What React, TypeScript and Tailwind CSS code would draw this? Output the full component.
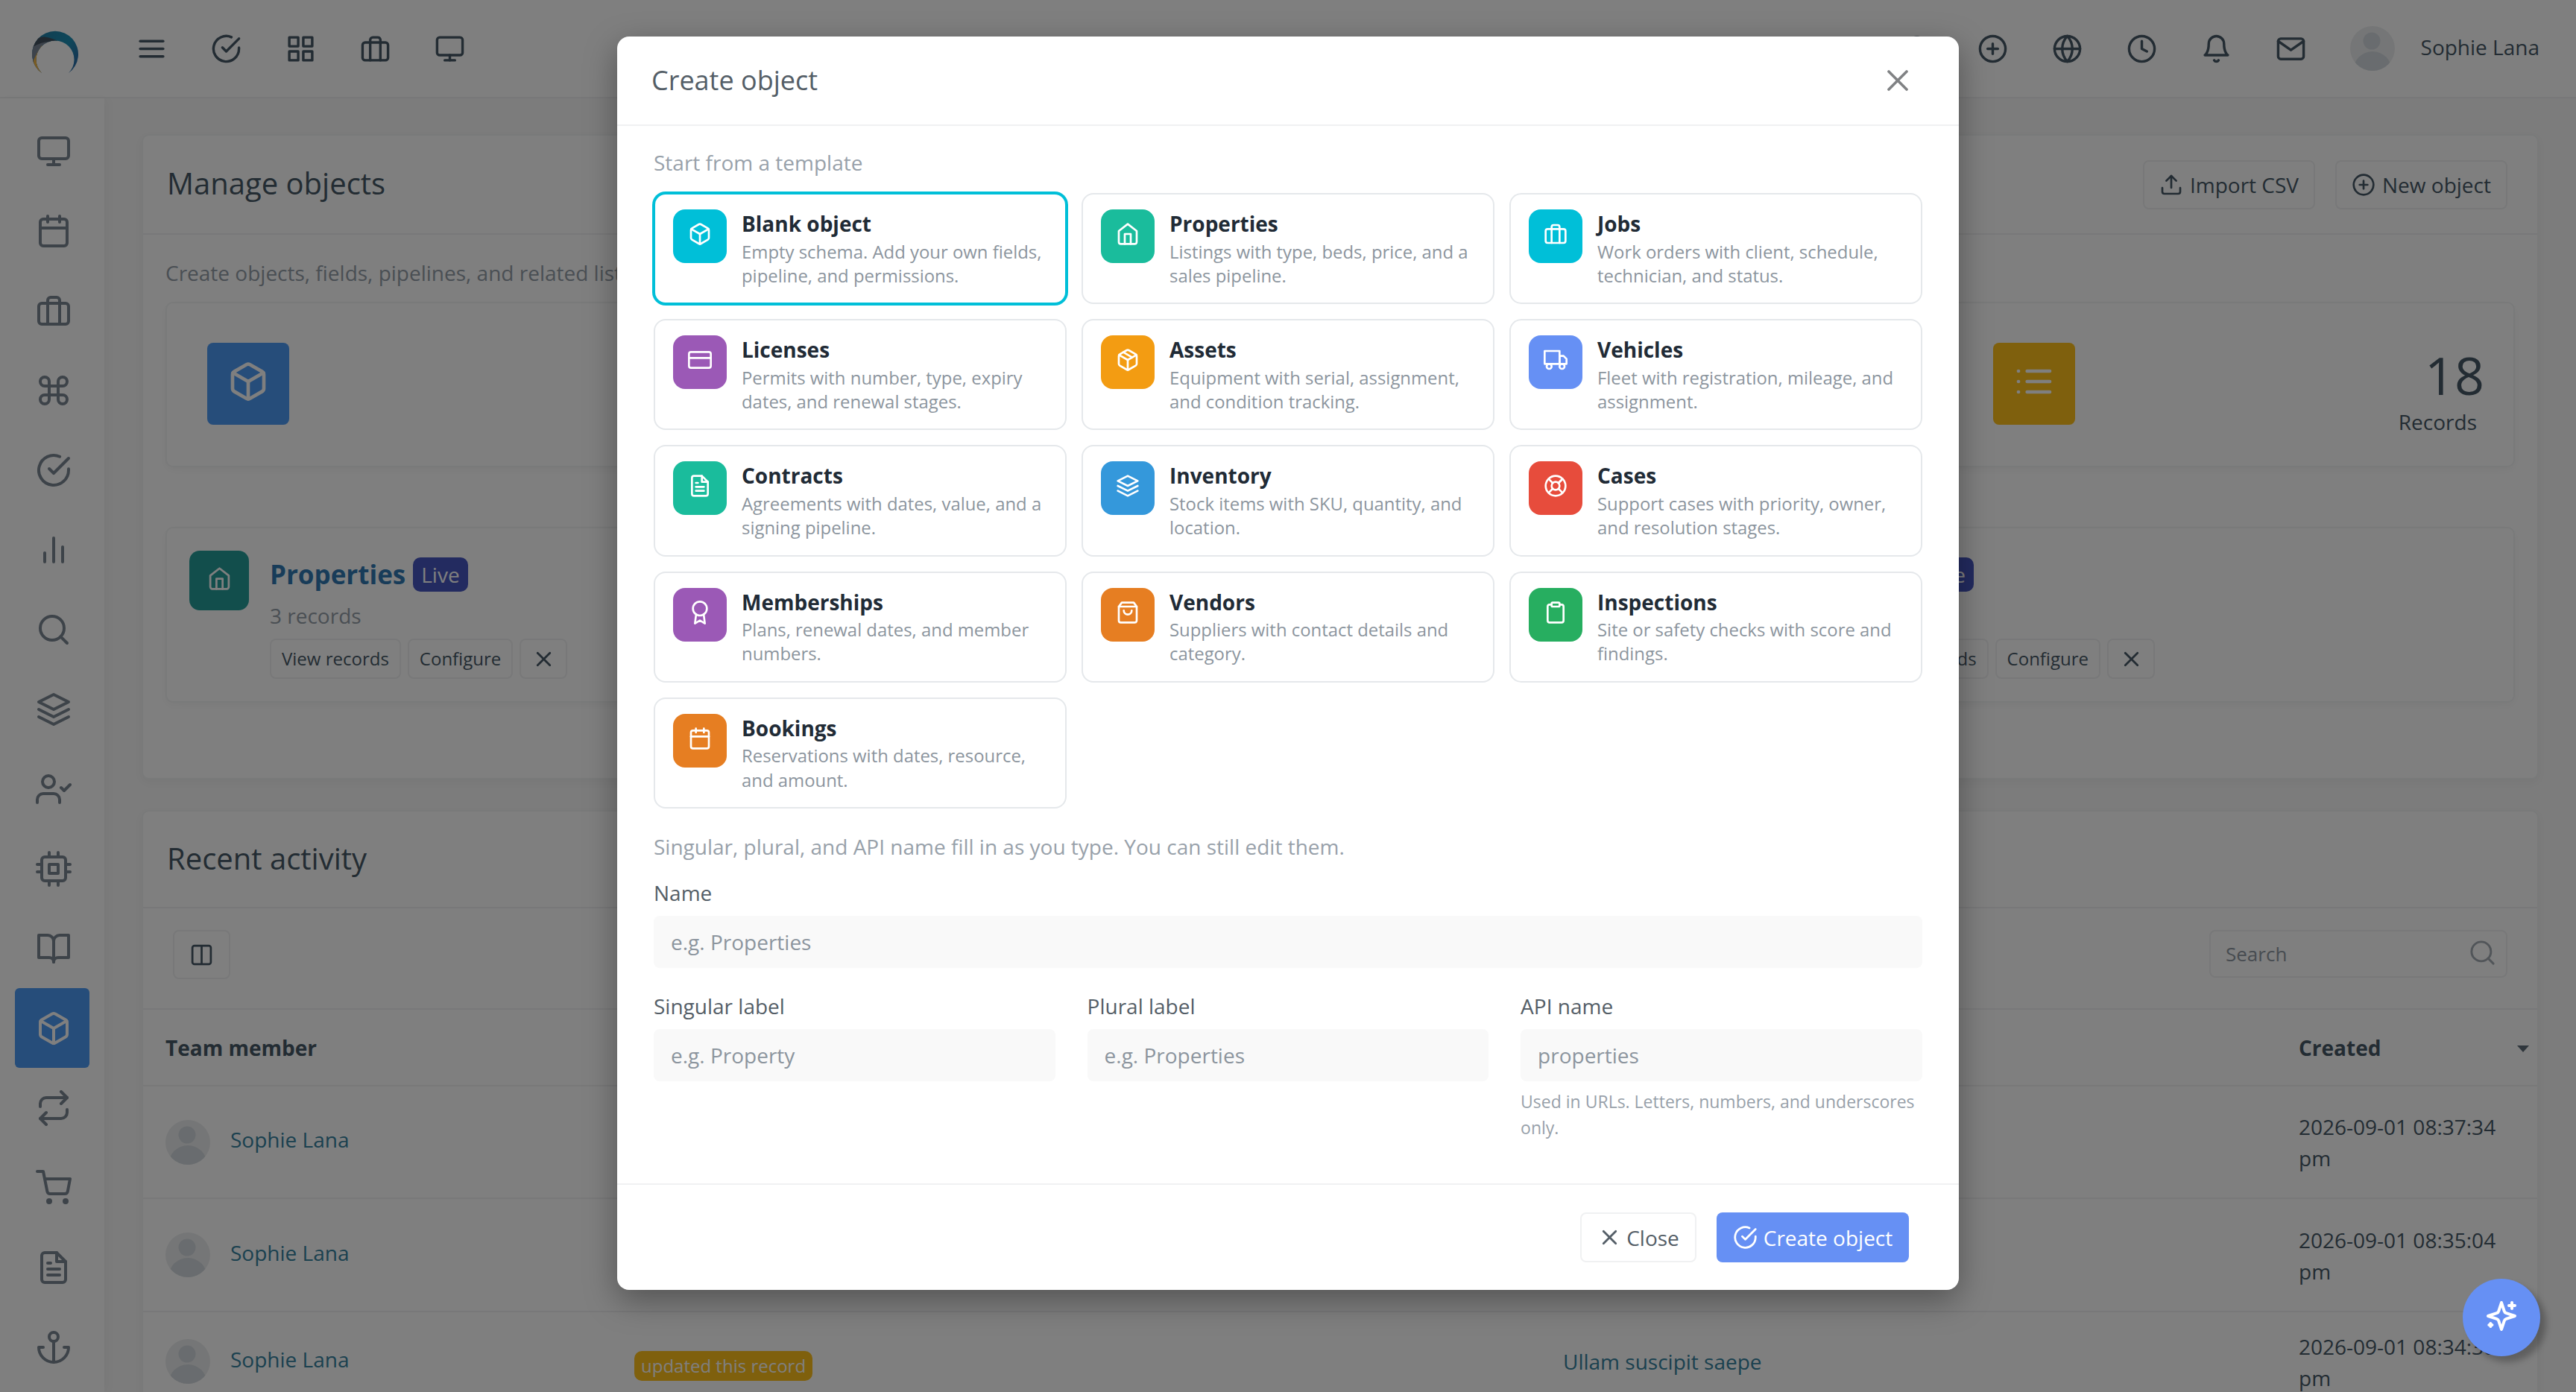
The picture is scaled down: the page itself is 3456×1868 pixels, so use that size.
import type { IconType } from 'react-icons'
import {
  FiAnchor,
  FiAward,
  FiBarChart2,
  FiBell,
  FiBook,
  FiBookOpen,
  FiBox,
  FiBriefcase,
  FiCalendar,
  FiCheckCircle,
  FiClipboard,
  FiClock,
  FiColumns,
  FiCommand,
  FiCpu,
  FiCreditCard,
  FiFileText,
  FiGlobe,
  FiGrid,
  FiHome,
  FiLayers,
  FiLifeBuoy,
  FiList,
  FiMail,
  FiMenu,
  FiMonitor,
  FiPackage,
  FiPlusCircle,
  FiRepeat,
  FiSearch,
  FiShoppingBag,
  FiShoppingCart,
  FiTruck,
  FiUpload,
  FiUserCheck,
  FiX,
} from 'react-icons/fi'
import clsx from 'clsx'

type Template = {
  name: string
  text: string
  icon: IconType
  color: string
}

const templates: Template[] = [
  { name: 'Blank object', text: 'Empty schema. Add your own fields, pipeline, and permissions.', icon: FiBox, color: 'bg-[#00bfd8]' },
  { name: 'Properties', text: 'Listings with type, beds, price, and a sales pipeline.', icon: FiHome, color: 'bg-[#1abc9c]' },
  { name: 'Jobs', text: 'Work orders with client, schedule, technician, and status.', icon: FiBriefcase, color: 'bg-[#00bfd8]' },
  { name: 'Licenses', text: 'Permits with number, type, expiry dates, and renewal stages.', icon: FiCreditCard, color: 'bg-[#9b59b6]' },
  { name: 'Assets', text: 'Equipment with serial, assignment, and condition tracking.', icon: FiPackage, color: 'bg-[#f39c12]' },
  { name: 'Vehicles', text: 'Fleet with registration, mileage, and assignment.', icon: FiTruck, color: 'bg-[#6690f4]' },
  { name: 'Contracts', text: 'Agreements with dates, value, and a signing pipeline.', icon: FiFileText, color: 'bg-[#1abc9c]' },
  { name: 'Inventory', text: 'Stock items with SKU, quantity, and location.', icon: FiLayers, color: 'bg-[#3498db]' },
  { name: 'Cases', text: 'Support cases with priority, owner, and resolution stages.', icon: FiLifeBuoy, color: 'bg-[#e74c3c]' },
  { name: 'Memberships', text: 'Plans, renewal dates, and member numbers.', icon: FiAward, color: 'bg-[#9b59b6]' },
  { name: 'Vendors', text: 'Suppliers with contact details and category.', icon: FiShoppingBag, color: 'bg-[#e67e22]' },
  { name: 'Inspections', text: 'Site or safety checks with score and findings.', icon: FiClipboard, color: 'bg-[#27ae60]' },
  { name: 'Bookings', text: 'Reservations with dates, resource, and amount.', icon: FiCalendar, color: 'bg-[#e67e22]' },
]

const sidebarIcons: IconType[] = [
  FiMonitor,
  FiCalendar,
  FiBriefcase,
  FiCommand,
  FiCheckCircle,
  FiBarChart2,
  FiSearch,
  FiLayers,
  FiUserCheck,
  FiCpu,
  FiBookOpen,
  FiBox,
  FiRepeat,
  FiShoppingCart,
  FiFileText,
  FiAnchor,
]

const leftIcons: IconType[] = [FiMenu, FiCheckCircle, FiGrid, FiBriefcase, FiMonitor]
const rightIcons: IconType[] = [FiSearch, FiPlusCircle, FiGlobe, FiClock, FiBell, FiMail]

const stats = [
  { label: 'Objects', value: '3', icon: FiBox, color: 'bg-[#4c9af4]' },
  { label: 'Live', value: '3', icon: FiCheckCircle, color: 'bg-[#1abc9c]' },
  { label: 'Fields', value: '24', icon: FiBook, color: 'bg-[#4656c0]' },
  { label: 'Records', value: '18', icon: FiList, color: 'bg-[#ffc01a]' },
]

const objects = [
  { name: 'Properties', count: '3 records', icon: FiHome, color: 'bg-[#249c99]' },
  { name: 'Vehicles', count: '9 records', icon: FiTruck, color: 'bg-[#6690f4]' },
  { name: 'Jobs', count: '6 records', icon: FiBriefcase, color: 'bg-[#00bfd8]' },
]

const activity = [
  { member: 'Sophie Lana', event: 'created this record', target: '', date: '2026-09-01 08:37:34 pm', height: 'h-[151px]' },
  { member: 'Sophie Lana', event: 'created this record', target: '', date: '2026-09-01 08:35:04 pm', height: 'h-[152px]' },
  { member: 'Sophie Lana', event: 'updated this record', target: 'Ullam suscipit saepe', date: '2026-09-01 08:34:38 pm', height: 'h-[134px]' },
]

const Logo = () => (
  <svg className="w-16 h-16" viewBox="0 0 64 64">
    <defs>
      <clipPath id="arch">
        <path d="M14 60A31 31 0 1 1 50 60A25.5 25.5 0 1 0 14 60Z" />
      </clipPath>
      <linearGradient id="ocean" x1="0" y1="0" x2="1" y2="0.6">
        <stop offset="0" stopColor="#2478a0" />
        <stop offset="0.7" stopColor="#1d8fb4" />
        <stop offset="1" stopColor="#2a6fa8" />
      </linearGradient>
    </defs>
    <g clipPath="url(#arch)">
      <rect width="64" height="64" fill="url(#ocean)" />
      <path d="M0 20L16 16L24 18V64H0Z" fill="#7b8696" />
      <path d="M0 27L2 19Q8 11 18 11.500Q29 13 37 18L24 18Q14 18 2 25Z" fill="#43505e" />
      <path d="M14 23Q7 33 3 43L4 58L14 64L26 50Z" fill="#f5b848" />
    </g>
  </svg>
)

const Avatar = () => (
  <svg className="w-[60px] h-[60px] shrink-0" viewBox="0 0 60 60">
    <clipPath id="face">
      <circle cx="30" cy="30" r="30" />
    </clipPath>
    <g clipPath="url(#face)">
      <rect width="60" height="60" fill="#ebedee" />
      <circle cx="29" cy="20" r="11.500" fill="#d3d9de" />
      <circle cx="30" cy="60" r="26" fill="#d3d9de" />
    </g>
  </svg>
)

const Sparkles = () => (
  <svg
    className="w-12 h-12"
    viewBox="0 0 24 24"
    fill="none"
    stroke="currentColor"
    strokeWidth="2"
    strokeLinecap="round"
    strokeLinejoin="round"
  >
    <path d="M12 3l1.900 5.800a2 2 0 0 0 1.300 1.300L21 12l-5.800 1.900a2 2 0 0 0-1.300 1.300L12 21l-1.900-5.800a2 2 0 0 0-1.300-1.300L3 12l5.800-1.900a2 2 0 0 0 1.300-1.300L12 3z" />
    <path d="M19 3v4M21 5h-4" />
    <path d="M4.700 17l.3.700.7.300-.7.300-.3.700-.3-.7-.7-.3.700-.3z" />
  </svg>
)

const TopBar = () => (
  <header className="flex h-[132px] shrink-0 items-center justify-between border-b-2 border-[#f0f1f2] bg-white pr-[49px]">
    <div className="flex items-center">
      <div className="flex w-[182.5px] pl-[42px] pt-2.5">
        <Logo />
      </div>
      <div className="flex gap-[59px]">
        {leftIcons.map((Icon, i) => (
          <Icon key={i} className="w-[41px] h-[41px]" />
        ))}
      </div>
    </div>
    <div className="flex items-center">
      <div className="flex gap-[59px] pr-[59px]">
        {rightIcons.map((Icon, i) => (
          <Icon key={i} className="w-[41px] h-[41px]" />
        ))}
      </div>
      <Avatar />
      <span className="pl-[35px] -mt-1">Sophie Lana</span>
    </div>
  </header>
)

const Sidebar = () => (
  <nav className="flex w-[140px] shrink-0 flex-col items-center bg-white pt-[17px] shadow-[4px_0_12px_rgba(0,0,0,0.03)]">
    {sidebarIcons.map((Icon, i) => (
      <a
        key={i}
        className={clsx(
          'flex h-[107px] w-[100px] shrink-0 items-center justify-center rounded-md pl-1',
          i === 11 ? 'bg-[#4c9af4] text-white' : 'text-[#7a8692]'
        )}
      >
        <Icon className="w-12 h-12" />
      </a>
    ))}
  </nav>
)

const cardClass = 'rounded-[10px] border-2 border-[#f3f4f5] bg-white shadow-[0_4px_12px_rgba(0,0,0,0.04)]'
const buttonClass = 'flex items-center rounded-lg border-2 border-[#f0f1f2]'

const ManageObjects = () => (
  <section className={clsx(cardClass, 'h-[866px] shrink-0')}>
    <div className="flex h-[133px] items-center justify-between border-b-2 border-[#f0f1f2] pl-8 pr-10">
      <h2 className="-mt-[3px] text-[40px]">Manage objects</h2>
      <div className="flex gap-[27px]">
        <button className={clsx(buttonClass, 'h-[66px] w-[231px] justify-center gap-[9px]')}>
          <FiUpload className="w-8 h-8" />
          <span>Import CSV</span>
        </button>
        <button className={clsx(buttonClass, 'h-[66px] w-[231px] justify-center gap-[9px]')}>
          <FiPlusCircle className="w-8 h-8" />
          <span>New object</span>
        </button>
      </div>
    </div>
    <div className="px-[30px] pt-[30px]">
      <p className="text-[#949ea8]">Create objects, fields, pipelines, and related lists.</p>
      <div className="mt-[18px] grid grid-cols-4 gap-[42.66px]">
        {stats.map(({ label, value, icon: Icon, color }) => (
          <div key={label} className={clsx(cardClass, 'flex h-[222px] justify-between pl-[54px] pr-[39px] pt-[54px]')}>
            <div className={clsx('-mt-px flex h-[110px] w-[110px] items-center justify-center rounded-lg pb-1.5 text-white', color)}>
              <Icon className="w-[56px] h-[56px]" />
            </div>
            <div className="-mt-0.5 text-right">
              <div className="text-[70px] leading-[88px]">{value}</div>
              <div className="pr-2.5 -mt-[2px]">{label}</div>
            </div>
          </div>
        ))}
      </div>
      <div className="mt-[80px] grid grid-cols-3 gap-[42.66px]">
        {objects.map(({ name, count, icon: Icon, color }) => (
          <div key={name} className={clsx(cardClass, 'flex h-[236px] gap-[28px] p-[30px]')}>
            <div className={clsx('flex h-20 w-20 items-center justify-center rounded-[14px] pb-1.5 text-white', color)}>
              <Icon className="w-[33px] h-[33px]" />
            </div>
            <div>
              <div className="flex items-center gap-2.5 pt-[6px]">
                <h3 className="text-[35px] leading-[51px] font-bold text-[#3079b2]">{name}</h3>
                <span className="flex h-[46px] items-center rounded-[10px] bg-[#4656c0] px-[11px] text-white">Live</span>
              </div>
              <p className="pt-[9px] text-[#949ea8]">{count}</p>
              <div className="mt-[10px] flex gap-[9px] text-2xl">
                <button className={clsx(buttonClass, 'h-[54px] px-[14px]')}>View records</button>
                <button className={clsx(buttonClass, 'h-[54px] px-[14px]')}>Configure</button>
                <button className={clsx(buttonClass, 'h-[54px] w-[64px] justify-center')}>
                  <FiX className="w-[33px] h-[33px]" />
                </button>
              </div>
            </div>
          </div>
        ))}
      </div>
    </div>
  </section>
)

const rowGrid = 'grid grid-cols-[629px_1246px_987px_1fr] items-center pl-[30px]'

const RecentActivity = () => (
  <section className={clsx(cardClass, 'mt-[41px] h-[900px] shrink-0')}>
    <div className="flex h-[130px] items-center border-b-2 border-[#f0f1f2] pl-8">
      <h2 className="-mt-[3px] text-[40px]">Recent activity</h2>
    </div>
    <div className="flex h-[136px] justify-between border-b-2 border-[#f0f1f2] px-10 pt-[29px]">
      <button className={clsx(buttonClass, 'h-[66px] w-[77px] justify-center')}>
        <FiColumns className="w-[33px] h-[33px]" />
      </button>
      <div className={clsx(buttonClass, 'h-[64px] w-[400px] justify-between pl-5 pr-3')}>
        <span className="text-[26px] text-[#8f99a3]">Search</span>
        <FiSearch className="-mt-1 w-[39px] h-[39px] text-[#a3aab2]" strokeWidth={1.8} />
      </div>
    </div>
    <div className={clsx(rowGrid, 'h-[103px] border-b-2 border-[#f0f1f2] font-bold')}>
      <span>Team member</span>
      <span>Event</span>
      <span>Record</span>
      <span className="flex items-center justify-between pr-[11px]">
        Created
        <svg className="w-4 h-2.5 mt-1" viewBox="0 0 16 10">
          <path d="M0 0h16L8 9z" fill="#5e6c79" />
        </svg>
      </span>
    </div>
    {activity.map((row) => (
      <div key={row.date} className={clsx(rowGrid, row.height, 'border-b-2 border-[#f0f1f2]')}>
        <div className="flex items-center gap-[27px] text-[#36829f]">
          <Avatar />
          <span className="-mt-[7px]">{row.member}</span>
        </div>
        <div>
          <span className="inline-flex h-10 items-center rounded-[10px] bg-[#ffc01a] px-[9px] mt-3 text-2xl text-white">{row.event}</span>
        </div>
        <div className="text-[#36829f]">{row.target}</div>
        <div className="w-[270px] pt-px">{row.date}</div>
      </div>
    ))}
  </section>
)

const TemplateCard = ({ template, selected }: { template: Template; selected: boolean }) => {
  const Icon = template.icon

  return (
    <button
      className={clsx(
        'flex h-[149.2px] items-start gap-5 rounded-2xl border-2 bg-white pl-6 pr-5 pt-5 text-left',
        selected ? 'border-[#00bfd8] shadow-[0_0_0_2px_#00bfd8]' : 'border-[#e5e8eb]'
      )}
    >
      <div className={clsx('flex h-[72px] w-[72px] shrink-0 items-center justify-center rounded-2xl pb-1.5 text-white', template.color)}>
        <Icon className="w-8 h-8" />
      </div>
      <div>
        <div className="mt-px mb-[3.5px] text-[28px] leading-[36px] font-bold text-[#212b36]">{template.name}</div>
        <div className="text-[23.9px] leading-[32.4px] text-[#8c959e]">{template.text}</div>
      </div>
    </button>
  )
}

const Field = ({ label, placeholder, hint }: { label: string; placeholder: string; hint?: string }) => (
  <label className="block">
    <span className="block leading-[42px]">{label}</span>
    <input
      type="text"
      placeholder={placeholder}
      className="mt-2.5 block h-[70px] w-full rounded-lg bg-[#f9f9f9] px-[23px] placeholder-[#8c959e]"
    />
    {hint && <span className="mt-2.5 block text-[23px] leading-[35.5px] text-[#98a1aa]">{hint}</span>}
  </label>
)

const CreateObjectModal = () => (
  <div className="flex h-[1682px] w-[1800px] flex-col rounded-[16px] bg-white text-[#545e67] shadow-[0_14px_44px_rgba(0,0,0,0.35)]">
    <div className="flex h-[120px] shrink-0 items-center justify-between border-b-2 border-[#f0f1f2] pl-[46px] pr-[62px]">
      <h2 className="text-[36px]">Create object</h2>
      <FiX className="w-10 h-10 text-[#808284]" strokeWidth={1.8} viewBox="2 2 20 20" />
    </div>
    <div className="flex-1 px-[49px] pt-[28px]">
      <p className="text-[#98a1aa]">Start from a template</p>
      <div className="mt-5 grid grid-cols-3 gap-5">
        {templates.map((template, i) => (
          <TemplateCard key={template.name} template={template} selected={i === 0} />
        ))}
      </div>
      <p className="mt-[30px] text-[#98a1aa]">Singular, plural, and API name fill in as you type. You can still edit them.</p>
      <div className="mt-5">
        <Field label="Name" placeholder="e.g. Properties" />
      </div>
      <div className="mt-[30px] grid grid-cols-3 gap-[42.66px]">
        <Field label="Singular label" placeholder="e.g. Property" />
        <Field label="Plural label" placeholder="e.g. Properties" />
        <Field label="API name" placeholder="properties" hint="Used in URLs. Letters, numbers, and underscores only." />
      </div>
    </div>
    <div className="flex h-[143px] shrink-0 items-start justify-end gap-[27px] border-t-2 border-[#f0f1f2] pr-[67px] pt-[37px]">
      <button className={clsx(buttonClass, 'h-[67px] w-[156px] justify-center gap-1.5')}>
        <FiX className="w-[33px] h-[33px]" />
        <span>Close</span>
      </button>
      <button className="flex h-[67px] w-[258px] items-center justify-center gap-2 rounded-lg bg-[#6690f4] text-white">
        <FiCheckCircle className="w-[33px] h-[33px]" />
        <span>Create object</span>
      </button>
    </div>
  </div>
)

const App = () => {
  return (
    <div className="relative h-[1868px] w-[3456px] overflow-hidden bg-[#f8f8f8] font-['Open_Sans',sans-serif] text-[28px] leading-[42px] text-[#465866]">
      <div className="flex h-full flex-col">
        <TopBar />
        <div className="flex min-h-0 flex-1">
          <Sidebar />
          <main className="flex min-w-0 flex-1 flex-col pl-[50px] pr-[50px] pt-12">
            <ManageObjects />
            <RecentActivity />
          </main>
        </div>
      </div>

      <div className="absolute inset-0 flex items-start justify-center bg-black/50 pt-[49px]">
        <CreateObjectModal />
      </div>

      <button
        aria-label="Assistant"
        className="absolute right-12 bottom-12 flex h-[104px] w-[104px] items-center justify-center rounded-full bg-[#6690f4] pb-1 text-white shadow-[8px_8px_8px_rgba(0,0,0,0.25)]"
      >
        <Sparkles />
      </button>
    </div>
  )
}

export default App
